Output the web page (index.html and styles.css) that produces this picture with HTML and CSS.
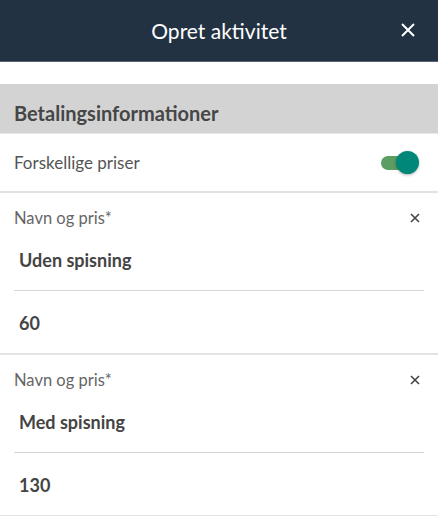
FILE: index.html
```html
<!DOCTYPE html>
<html lang="da">
<head>
    <meta charset="UTF-8">
    <meta name="viewport" content="width=device-width, initial-scale=1.0">
    <title>Opret aktivitet</title>
    <link rel="stylesheet" href="styles.css">
</head>
<body>
    <header class="topbar">
        <h1>Opret aktivitet</h1>
        <button class="close-button" aria-label="Luk">
            <svg width="14" height="14" viewBox="0 0 14 14"><path d="M1 1L13 13M13 1L1 13" stroke="#fff" stroke-width="2" fill="none"/></svg>
        </button>
    </header>

    <div class="section-title">Betalingsinformationer</div>

    <!-- toggle row -->
    <div class="toggle-row">
        <span>Forskellige priser</span>
        <span class="switch"><span class="thumb"></span></span>
    </div>

    <!-- prices -->
    <div class="price-group">
        <div class="price-label">
            <span>Navn og pris*</span>
            <svg width="10" height="10" viewBox="0 0 10 10"><path d="M1 1L9 9M9 1L1 9" stroke="#444" stroke-width="1.6" fill="none"/></svg>
        </div>
        <div class="price-name">Uden spisning</div>
        <div class="price-value">60</div>
    </div>

    <div class="price-group">
        <div class="price-label">
            <span>Navn og pris*</span>
            <svg width="10" height="10" viewBox="0 0 10 10"><path d="M1 1L9 9M9 1L1 9" stroke="#444" stroke-width="1.6" fill="none"/></svg>
        </div>
        <div class="price-name">Med spisning</div>
        <div class="price-value">130</div>
    </div>
</body>
</html>
```

FILE: styles.css
```css
body {
    font-family: Lato, "Open Sans", sans-serif;
    margin: 0;
    background: #fff;
    color: #444;
}
.topbar {
    height: 61px;
    background-color: #223242;
    border-bottom: 1px solid #56646f;
    display: flex;
    align-items: center;
    justify-content: center;
    position: relative;
}
.topbar h1 {
    margin: 0;
    font-size: 21px;
    font-weight: 400;
    color: #fff;
}
.close-button {
    position: absolute;
    right: 23px;
    top: 23px;
    background: none;
    border: none;
    padding: 0;
    display: flex;
}
.section-title {
    margin-top: 22px;
    height: 44px;
    padding: 5px 14px 0;
    line-height: 49px;
    background-color: #d3d3d3;
    border-bottom: 1px solid #e8e8e8;
    font-size: 20px;
    font-weight: 700;
    color: #464646;
}
.toggle-row {
    height: 57px;
    padding: 0 25px 0 14px;
    display: flex;
    align-items: center;
    justify-content: space-between;
    border-bottom: 2px solid #e2e2e2;
    font-size: 17px;
    color: #555;
}
.switch {
    width: 32px;
    height: 14px;
    border-radius: 7px;
    background-color: #5b9d62;
    position: relative;
}
.switch .thumb {
    position: absolute;
    right: -6px;
    top: -5px;
    width: 23px;
    height: 23px;
    border-radius: 50%;
    background-color: #00877a;
    box-shadow: 0 1px 3px rgba(0,0,0,0.3);
}
.price-group {
    border-bottom: 2px solid #e4e4e4;
}
.price-label {
    height: 49px;
    padding: 0 18px 0 14px;
    display: flex;
    align-items: center;
    justify-content: space-between;
    font-size: 16.5px;
    color: #666;
}
.price-name {
    margin: 0 14px;
    padding: 0 5px 11px;
    line-height: 37px;
    border-bottom: 1px solid #d6d6d6;
    font-size: 18px;
    font-weight: 700;
    color: #444;
}
.price-value {
    padding: 0 19px;
    height: 62px;
    line-height: 64px;
    font-size: 18px;
    font-weight: 700;
    color: #444;
}
```
